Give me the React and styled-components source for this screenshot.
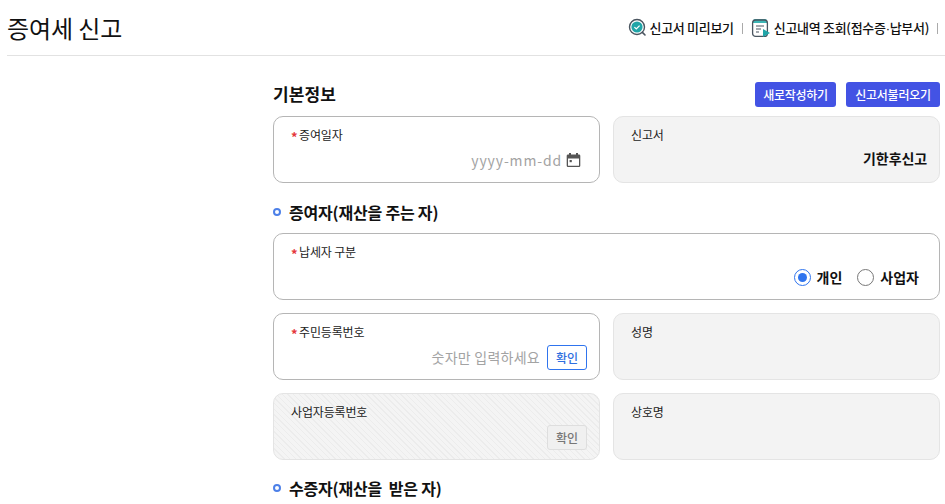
import React from "react";
import styled, { createGlobalStyle } from "styled-components";

const Global = createGlobalStyle`
  html, body {
    margin: 0;
    height: 504px;
    overflow: hidden;
    background: #fff;
    font-family: "Noto Sans CJK KR", "Noto Sans", sans-serif;
    color: #111;
  }
  * { box-sizing: border-box; }
`;

const Header = styled.header`
  height: 56px;
  margin-left: 7px;
  border-bottom: 1px solid #e2e2e2;
  display: flex;
  align-items: center;
  justify-content: space-between;
`;

const Title = styled.h1`
  margin: 0;
  font-size: 24px;
  font-weight: 400;
  letter-spacing: -0.1px;
  line-height: 32px;
`;

const HeaderMenu = styled.nav`
  display: flex;
  align-items: center;
  font-size: 13px;
  font-weight: 500;
  letter-spacing: -0.3px;
`;

const MenuItem = styled.a`
  display: flex;
  align-items: center;
  gap: ${(p) => p.$gap}px;
  color: #111;
`;

const NarrowDot = styled.span`
  font-family: "Liberation Sans", sans-serif;
`;

const MenuDivider = styled.span`
  width: 1px;
  height: 11px;
  background: #aaa;
  margin: 2px ${(p) => p.$right}px 0 ${(p) => p.$left}px;
`;

const Main = styled.main`
  margin-left: 273px;
  width: 667px;
  padding-top: 25px;
`;

const TopRow = styled.div`
  display: flex;
  align-items: center;
  justify-content: space-between;
  height: 25px;
  margin-bottom: 10px;
`;

const SectionTitle = styled.h2`
  margin: 0;
  font-size: 17px;
  font-weight: 700;
  letter-spacing: 0.1px;
`;

const ButtonGroup = styled.div`
  display: flex;
  gap: 10px;
  margin-top: 1px;
`;

const PrimaryButton = styled.button`
  height: 25px;
  width: ${(p) => p.$width}px;
  padding: 0;
  border: 0;
  border-radius: 3px;
  background: #4353e4;
  color: #fff;
  font-family: inherit;
  font-size: 12px;
  font-weight: 500;
  letter-spacing: -0.25px;
`;

const Grid = styled.div`
  display: grid;
  grid-template-columns: ${(p) => (p.$wide ? "1fr" : "327px 327px")};
  column-gap: 13px;
  margin-bottom: ${(p) => p.$bottom || 13}px;
`;

const Card = styled.div`
  height: 67px;
  border-radius: 10px;
  padding: 9px 12px 0 17px;
  display: flex;
  flex-direction: column;
  border: 1px solid ${(p) => (p.$variant === "active" ? "#b5b5b5" : "#e4e4e4")};
  background: ${(p) =>
    p.$variant === "active"
      ? "#fff"
      : p.$variant === "hatched"
      ? "repeating-linear-gradient(45deg, #f4f4f4 0 3px, #ececec 3px 4px)"
      : "#f3f3f3"};
`;

const Label = styled.label`
  display: flex;
  align-items: center;
  height: 18px;
  font-size: 12px;
  line-height: 18px;
  letter-spacing: -0.15px;
  color: #222;
`;

const Required = styled.span`
  color: #e5383b;
  font-size: 13px;
  font-weight: 700;
  line-height: 12px;
  width: 8px;
  margin-top: 4px;
`;

const FieldRow = styled.div`
  display: flex;
  align-items: center;
  justify-content: flex-end;
  gap: ${(p) => p.$gap || 4}px;
  height: 24px;
  margin-top: 4px;
`;

const Placeholder = styled.span`
  font-size: 14px;
  color: #a3a3a3;
  letter-spacing: ${(p) => (p.$latin ? "0.85px" : "0.25px")};
`;

const CalendarSlot = styled.span`
  display: flex;
  margin-right: 6px;
`;

const Value = styled.span`
  font-size: 14px;
  font-weight: 700;
  letter-spacing: -0.1px;
  margin-top: -4px;
`;

const CheckButton = styled.button`
  width: 40px;
  height: 25px;
  padding: 0;
  border-radius: 3px;
  font-family: inherit;
  font-size: 12px;
  font-weight: 500;
  background: ${(p) => (p.disabled ? "#f0f0f0" : "#fff")};
  color: ${(p) => (p.disabled ? "#777" : "#2f6fe0")};
  border: 1px solid ${(p) => (p.disabled ? "#dedede" : "#2f74ee")};
`;

const SubTitle = styled.div`
  display: flex;
  align-items: center;
  gap: 8px;
  height: 24px;
  margin-bottom: ${(p) => p.$bottom}px;
  font-size: 16px;
  font-weight: 700;
  letter-spacing: -0.2px;
`;

const Dot = styled.i`
  width: 8px;
  height: 8px;
  border-radius: 50%;
  border: 2px solid #4d80e8;
`;

const RadioGroup = styled.div`
  display: flex;
  align-items: center;
  gap: 15px;
  margin-right: 8px;
`;

const RadioLabel = styled.span`
  display: flex;
  align-items: center;
  gap: 6px;
  font-size: 14px;
  font-weight: 700;
`;

const RadioMark = styled.i`
  width: 17px;
  height: 17px;
  border-radius: 50%;
  border: 1px solid ${(p) => (p.$on ? "#2f74ee" : "#777")};
  display: flex;
  align-items: center;
  justify-content: center;
  &::after {
    content: "";
    width: 9px;
    height: 9px;
    border-radius: 50%;
    background: ${(p) => (p.$on ? "#2f74ee" : "transparent")};
  }
`;

const PreviewIcon = () => (
  <svg width="19" height="19" viewBox="0 0 19 19" fill="none">
    <circle cx="9" cy="9" r="7.5" stroke="#4a5560" strokeWidth="1.4" />
    <circle cx="9" cy="9" r="5.6" fill="#20a5a8" />
    <path d="M6.4 9.1l1.9 1.8 3.3-3.3" stroke="#fff" strokeWidth="1.3" fill="none" />
    <path d="M14.4 14.4l2.6 2.6" stroke="#4a5560" strokeWidth="1.6" strokeLinecap="round" />
  </svg>
);

const HistoryIcon = () => (
  <svg width="20" height="21" viewBox="0 0 20 21" fill="none">
    <path d="M4 2h10a2 2 0 012 2v2H2V4a2 2 0 012-2z" fill="#3db5b5" />
    <rect x="1.6" y="3" width="14.8" height="16.4" rx="3" stroke="#4a5560" strokeWidth="1.3" />
    <path d="M5 9h8M5 12h5M5 15h3" stroke="#4a5560" strokeWidth="1.2" />
    <path d="M12 12l7 4-7 4z" fill="#20a5a8" />
  </svg>
);

const CalendarIcon = () => (
  <svg width="15" height="16" viewBox="0 0 15 16">
    <path
      d="M3 1h2v1.5h5V1h2v1.5h1a1.3 1.3 0 011.3 1.3v10a1.3 1.3 0 01-1.3 1.3H2A1.3 1.3 0 01.7 13.8v-10A1.3 1.3 0 012 2.5h1zM2 6.4v7.4h11V6.4z"
      fill="#555"
    />
    <rect x="3.6" y="8" width="2.2" height="2.2" fill="#555" />
  </svg>
);

const App = () => (
  <>
    <Global />
    <Header>
      <Title>증여세 신고</Title>
      <HeaderMenu>
        <MenuItem $gap={3}>
          <PreviewIcon />
          <span>신고서 미리보기</span>
        </MenuItem>
        <MenuDivider $left={8} $right={8} />
        <MenuItem $gap={3}>
          <HistoryIcon />
          <span>
            신고내역 조회(접수증<NarrowDot>·</NarrowDot>납부서)
          </span>
        </MenuItem>
        <MenuDivider $left={8} $right={7} />
      </HeaderMenu>
    </Header>
    <Main>
      <TopRow>
        <SectionTitle>기본정보</SectionTitle>
        <ButtonGroup>
          <PrimaryButton $width={81}>새로작성하기</PrimaryButton>
          <PrimaryButton $width={94}>신고서불러오기</PrimaryButton>
        </ButtonGroup>
      </TopRow>
      <Grid $bottom={17}>
        <Card $variant="active">
          <Label>
            <Required>*</Required>증여일자
          </Label>
          <FieldRow>
            <Placeholder $latin>yyyy-mm-dd</Placeholder>
            <CalendarSlot>
              <CalendarIcon />
            </CalendarSlot>
          </FieldRow>
        </Card>
        <Card>
          <Label>신고서</Label>
          <FieldRow>
            <Value>기한후신고</Value>
          </FieldRow>
        </Card>
      </Grid>
      <SubTitle $bottom={9}>
        <Dot />
        증여자(재산을 주는 자)
      </SubTitle>
      <Grid $wide>
        <Card $variant="active">
          <Label>
            <Required>*</Required>납세자 구분
          </Label>
          <FieldRow>
            <RadioGroup>
              <RadioLabel>
                <RadioMark $on />
                개인
              </RadioLabel>
              <RadioLabel>
                <RadioMark />
                사업자
              </RadioLabel>
            </RadioGroup>
          </FieldRow>
        </Card>
      </Grid>
      <Grid>
        <Card $variant="active">
          <Label>
            <Required>*</Required>주민등록번호
          </Label>
          <FieldRow $gap={7}>
            <Placeholder>숫자만 입력하세요</Placeholder>
            <CheckButton>확인</CheckButton>
          </FieldRow>
        </Card>
        <Card>
          <Label>성명</Label>
        </Card>
      </Grid>
      <Grid $bottom={16}>
        <Card $variant="hatched">
          <Label>사업자등록번호</Label>
          <FieldRow>
            <CheckButton disabled>확인</CheckButton>
          </FieldRow>
        </Card>
        <Card>
          <Label>상호명</Label>
        </Card>
      </Grid>
      <SubTitle $bottom={0}>
        <Dot />
        수증자(재산을&nbsp; 받은 자)
      </SubTitle>
    </Main>
  </>
);

export default App;
